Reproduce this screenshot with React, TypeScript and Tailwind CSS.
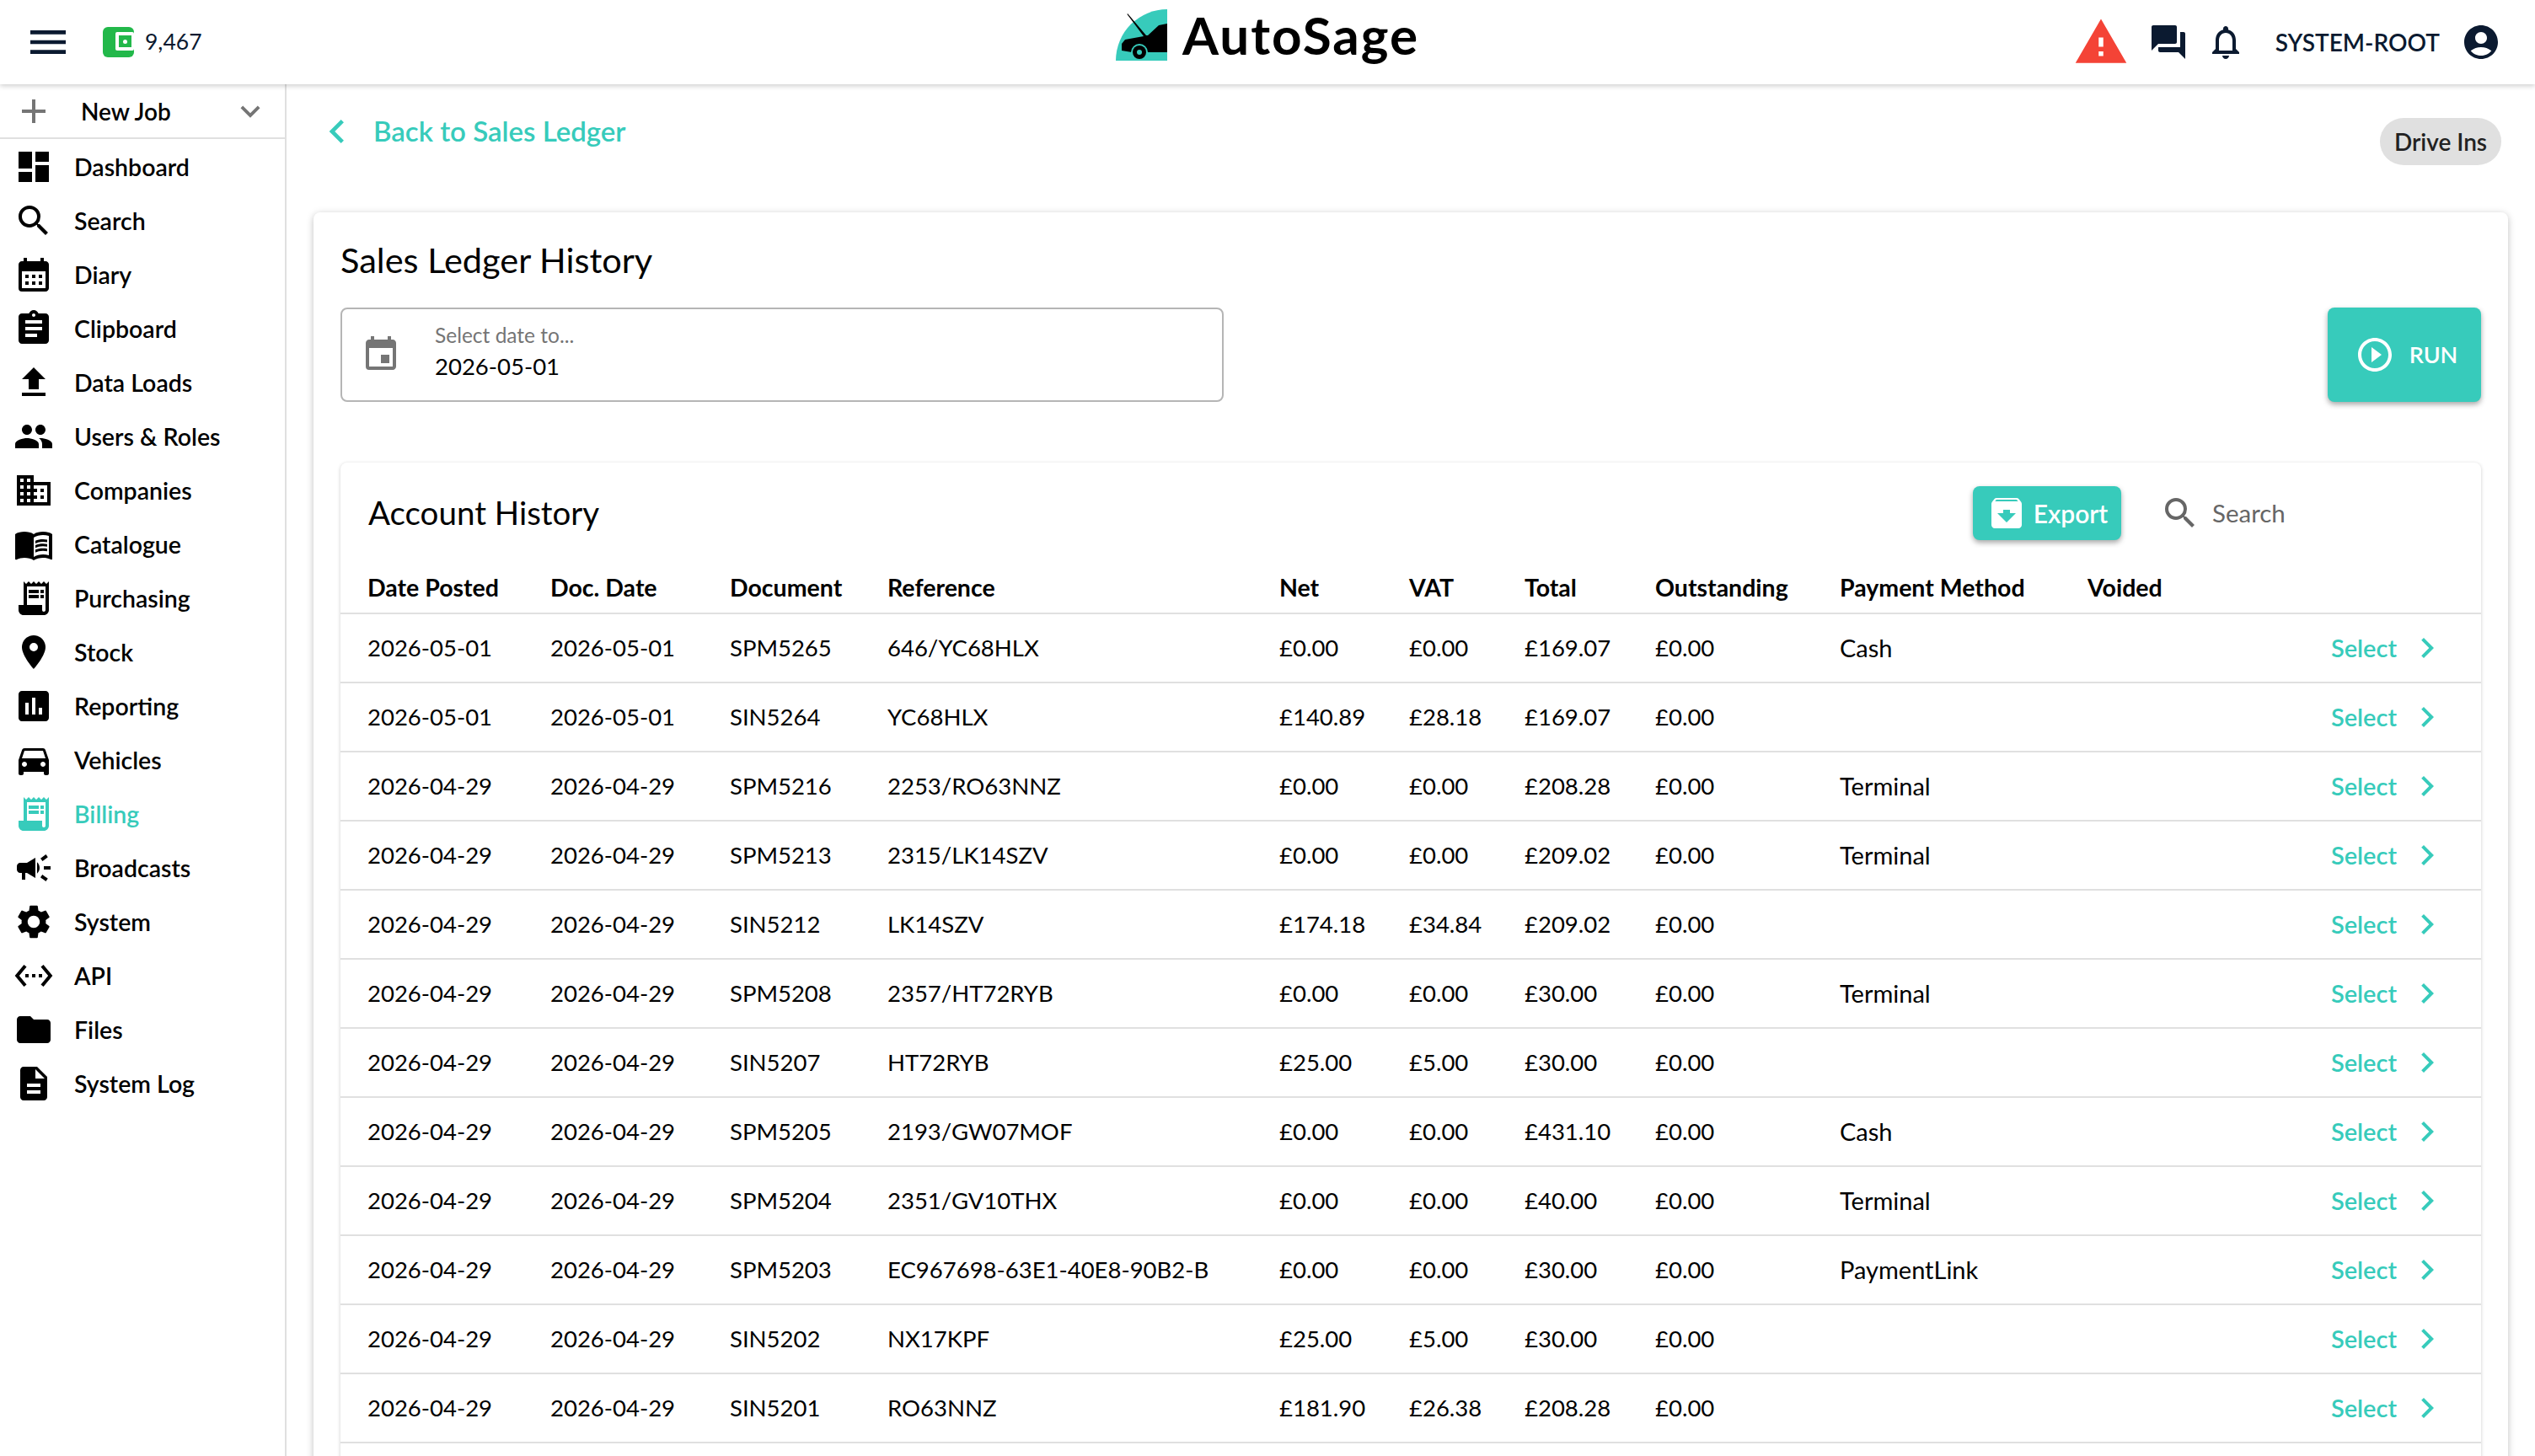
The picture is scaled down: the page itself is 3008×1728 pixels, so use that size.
import type { ReactNode } from "react";
import {
  MdAccountCircle,
  MdAdd,
  MdArchive,
  MdAssessment,
  MdAssignment,
  MdBusiness,
  MdCalendarMonth,
  MdCampaign,
  MdChevronLeft,
  MdChevronRight,
  MdDashboard,
  MdDescription,
  MdDirectionsCar,
  MdEvent,
  MdExpandMore,
  MdFileUpload,
  MdFolder,
  MdForum,
  MdMenu,
  MdMenuBook,
  MdNotificationsNone,
  MdPeople,
  MdPlace,
  MdPlayCircleOutline,
  MdReceiptLong,
  MdSearch,
  MdSettings,
  MdSettingsEthernet,
  MdWarning,
} from "react-icons/md";

const navItems = [
  { label: "Dashboard", icon: MdDashboard },
  { label: "Search", icon: MdSearch },
  { label: "Diary", icon: MdCalendarMonth },
  { label: "Clipboard", icon: MdAssignment },
  { label: "Data Loads", icon: MdFileUpload },
  { label: "Users & Roles", icon: MdPeople },
  { label: "Companies", icon: MdBusiness },
  { label: "Catalogue", icon: MdMenuBook },
  { label: "Purchasing", icon: MdReceiptLong },
  { label: "Stock", icon: MdPlace },
  { label: "Reporting", icon: MdAssessment },
  { label: "Vehicles", icon: MdDirectionsCar },
  { label: "Billing", icon: MdReceiptLong, active: true },
  { label: "Broadcasts", icon: MdCampaign },
  { label: "System", icon: MdSettings },
  { label: "API", icon: MdSettingsEthernet },
  { label: "Files", icon: MdFolder },
  { label: "System Log", icon: MdDescription },
];

const columns = [
  "Date Posted",
  "Doc. Date",
  "Document",
  "Reference",
  "Net",
  "VAT",
  "Total",
  "Outstanding",
  "Payment Method",
  "Voided",
];

const rows = [
  ["2026-05-01", "2026-05-01", "SPM5265", "646/YC68HLX", "£0.00", "£0.00", "£169.07", "£0.00", "Cash"],
  ["2026-05-01", "2026-05-01", "SIN5264", "YC68HLX", "£140.89", "£28.18", "£169.07", "£0.00", ""],
  ["2026-04-29", "2026-04-29", "SPM5216", "2253/RO63NNZ", "£0.00", "£0.00", "£208.28", "£0.00", "Terminal"],
  ["2026-04-29", "2026-04-29", "SPM5213", "2315/LK14SZV", "£0.00", "£0.00", "£209.02", "£0.00", "Terminal"],
  ["2026-04-29", "2026-04-29", "SIN5212", "LK14SZV", "£174.18", "£34.84", "£209.02", "£0.00", ""],
  ["2026-04-29", "2026-04-29", "SPM5208", "2357/HT72RYB", "£0.00", "£0.00", "£30.00", "£0.00", "Terminal"],
  ["2026-04-29", "2026-04-29", "SIN5207", "HT72RYB", "£25.00", "£5.00", "£30.00", "£0.00", ""],
  ["2026-04-29", "2026-04-29", "SPM5205", "2193/GW07MOF", "£0.00", "£0.00", "£431.10", "£0.00", "Cash"],
  ["2026-04-29", "2026-04-29", "SPM5204", "2351/GV10THX", "£0.00", "£0.00", "£40.00", "£0.00", "Terminal"],
  ["2026-04-29", "2026-04-29", "SPM5203", "EC967698-63E1-40E8-90B2-B", "£0.00", "£0.00", "£30.00", "£0.00", "PaymentLink"],
  ["2026-04-29", "2026-04-29", "SIN5202", "NX17KPF", "£25.00", "£5.00", "£30.00", "£0.00", ""],
  ["2026-04-29", "2026-04-29", "SIN5201", "RO63NNZ", "£181.90", "£26.38", "£208.28", "£0.00", ""],
];

const gridCols =
  "grid grid-cols-[217px_213px_187px_465px_154px_137px_155px_219px_294px_149px_1fr] pl-8 items-center";

function LogoMark() {
  return (
    <svg viewBox="0 0 61 61" className="w-[61px] h-[61px]">
      <path d="M0 61A61 61 0 0 1 61 0V61Z" fill="#37cbbb" />
      <path
        d="M61 17L51 19L38 31L36 31L14 5L13.5 6L33 32L11 36L7 41L7 49L19 51H61Z"
        fill="#000"
      />
      <circle cx="28" cy="51" r="10" fill="#37cbbb" />
      <circle cx="28" cy="51" r="8" fill="#000" />
      <circle cx="28" cy="51" r="3" fill="#37cbbb" />
    </svg>
  );
}

function Wallet() {
  return (
    <svg viewBox="0 0 37 36" className="w-[37px] h-[36px]">
      <rect width="37" height="36" rx="6" fill="#22b84a" />
      <rect x="15" y="6" width="22" height="22" rx="2" fill="#fff" />
      <rect x="19" y="10" width="15" height="14" fill="#22b84a" />
      <circle cx="26.5" cy="17.5" r="2.5" fill="#fff" />
    </svg>
  );
}

function Header() {
  return (
    <header className="relative z-10 h-[100px] grid grid-cols-[1fr_auto_1fr] items-center bg-white shadow-[0_2px_6px_rgba(0,0,0,0.2)] text-[#0b1a30]">
      <div className="flex items-center pl-[29px]">
        <MdMenu size={56} />
        <div className="ml-[37px]">
          <Wallet />
        </div>
        <span className="ml-[13px] text-[26.5px]">9,467</span>
      </div>
      <div className="flex items-center gap-[18px] h-[100px] pb-[18px]">
        <LogoMark />
        <span className="text-[62px] font-bold text-black leading-none tracking-[2px]">AutoSage</span>
      </div>
      <div className="flex items-center justify-end pr-[40px]">
        <MdWarning size={66} className="text-[#f44336]" />
        <MdForum size={48} className="ml-[23px]" />
        <MdNotificationsNone size={48} className="ml-[20px]" />
        <span className="ml-[35px] text-[28px] font-semibold">SYSTEM-ROOT</span>
        <MdAccountCircle size={48} className="ml-[25px]" />
      </div>
    </header>
  );
}

function Sidebar() {
  return (
    <aside className="w-[340px] shrink-0 border-r-2 border-[#e0e0e0] bg-white">
      <div className="h-[65px] flex items-center border-b-2 border-[#e0e0e0] pl-[16px] pr-[18px]">
        <MdAdd size={48} className="text-[#757575]" />
        <span className="ml-[32px] flex-1 text-[28px] font-semibold text-black">New Job</span>
        <MdExpandMore size={46} className="text-[#757575]" />
      </div>
      <nav className="pt-[1px]">
        {navItems.map((item) => {
          const Icon = item.icon;
          return (
            <div
              key={item.label}
              className={`h-[64px] flex items-center pl-[16px] ${item.active ? "text-[#37cbbb]" : "text-black"}`}
            >
              <Icon size={48} className="shrink-0" />
              <span className="ml-[24px] text-[28.5px] font-semibold">{item.label}</span>
            </div>
          );
        })}
      </nav>
    </aside>
  );
}

function Row({ cells }: { cells: string[] }) {
  return (
    <div className={`${gridCols} h-[82px] border-b-2 border-[#e0e0e0] text-[27.5px] text-black`}>
      {cells.map((cell, i) => (
        <span key={i} className={`whitespace-nowrap ${i === 8 ? "text-[29px]" : ""}`}>
          {cell}
        </span>
      ))}
      <span />
      <span className="flex items-center justify-end pr-[40px] text-[29px] text-[#37cbbb] font-semibold">
        Select
        <MdChevronRight size={48} className="ml-[12px]" />
      </span>
    </div>
  );
}

function Card({ children, className }: { children: ReactNode; className: string }) {
  return <div className={`bg-white rounded-lg ${className}`}>{children}</div>;
}

export default function App() {
  return (
    <div className="h-[1728px] w-[3008px] overflow-hidden flex flex-col bg-white font-['Lato',sans-serif]">
      <Header />
      <div className="flex flex-1 min-h-0">
        <Sidebar />
        <main className="flex-1 min-w-0 pl-[32px] pr-[32px]">
          <div className="h-[152px] flex justify-between items-start pt-[28px] pr-[8px]">
            <div className="flex items-center text-[#37cbbb]">
              <MdChevronLeft size={56} />
              <span className="ml-[15px] text-[33px] font-semibold">Back to Sales Ledger</span>
            </div>
            <div className="mt-[12px] h-[56px] w-[144px] flex items-center justify-center rounded-full bg-[#e0e0e0] text-[28px] font-semibold text-[#222]">
              Drive Ins
            </div>
          </div>
          <Card className="shadow-[0_2px_8px_rgba(0,0,0,0.25)] px-[32px] pb-[400px]">
            <h1 className="h-[113px] flex items-center text-[41.5px] text-black font-normal">
              Sales Ledger History
            </h1>
            <div className="flex justify-between items-start">
              <div className="w-[1048px] h-[112px] flex items-center rounded-lg border-2 border-[#b5b5b5] pl-[22px]">
                <MdEvent size={48} className="text-[#757575]" />
                <div className="ml-[40px] pb-[8px] flex flex-col">
                  <span className="text-[24.5px] text-[#757575] leading-[36px]">Select date to...</span>
                  <span className="text-[27.5px] text-black leading-[38px]">2026-05-01</span>
                </div>
              </div>
              <button className="w-[182px] h-[112px] flex items-center justify-center rounded-lg bg-[#37cbbb] text-white text-[27px] font-semibold shadow-[0_3px_6px_rgba(0,0,0,0.35)] pl-[4px]">
                <MdPlayCircleOutline size={48} />
                <span className="ml-[17px]">RUN</span>
              </button>
            </div>
            <Card className="mt-[72px] shadow-[0_1px_4px_rgba(0,0,0,0.2)]">
              <div className="h-[120px] flex items-center pl-[33px]">
                <h2 className="flex-1 text-[38.5px] text-black font-normal">Account History</h2>
                <button className="w-[176px] h-[64px] flex items-center justify-center rounded-lg bg-[#37cbbb] text-white text-[30px] font-semibold shadow-[0_3px_6px_rgba(0,0,0,0.35)]">
                  <MdArchive size={48} />
                  <span className="ml-[8px]">Export</span>
                </button>
                <div className="w-[427px] flex items-center pl-[46px] text-[#666]">
                  <MdSearch size={48} />
                  <span className="ml-[14px] text-[29.5px]">Search</span>
                </div>
              </div>
              <div className={`${gridCols} h-[60px] border-b-2 border-[#e0e0e0] text-[28.5px] font-bold text-black pb-[2px]`}>
                {columns.map((c) => (
                  <span key={c} className="whitespace-nowrap">
                    {c}
                  </span>
                ))}
              </div>
              {rows.map((r, i) => (
                <Row key={i} cells={r} />
              ))}
              <div className="h-[82px]" />
            </Card>
          </Card>
        </main>
      </div>
    </div>
  );
}
